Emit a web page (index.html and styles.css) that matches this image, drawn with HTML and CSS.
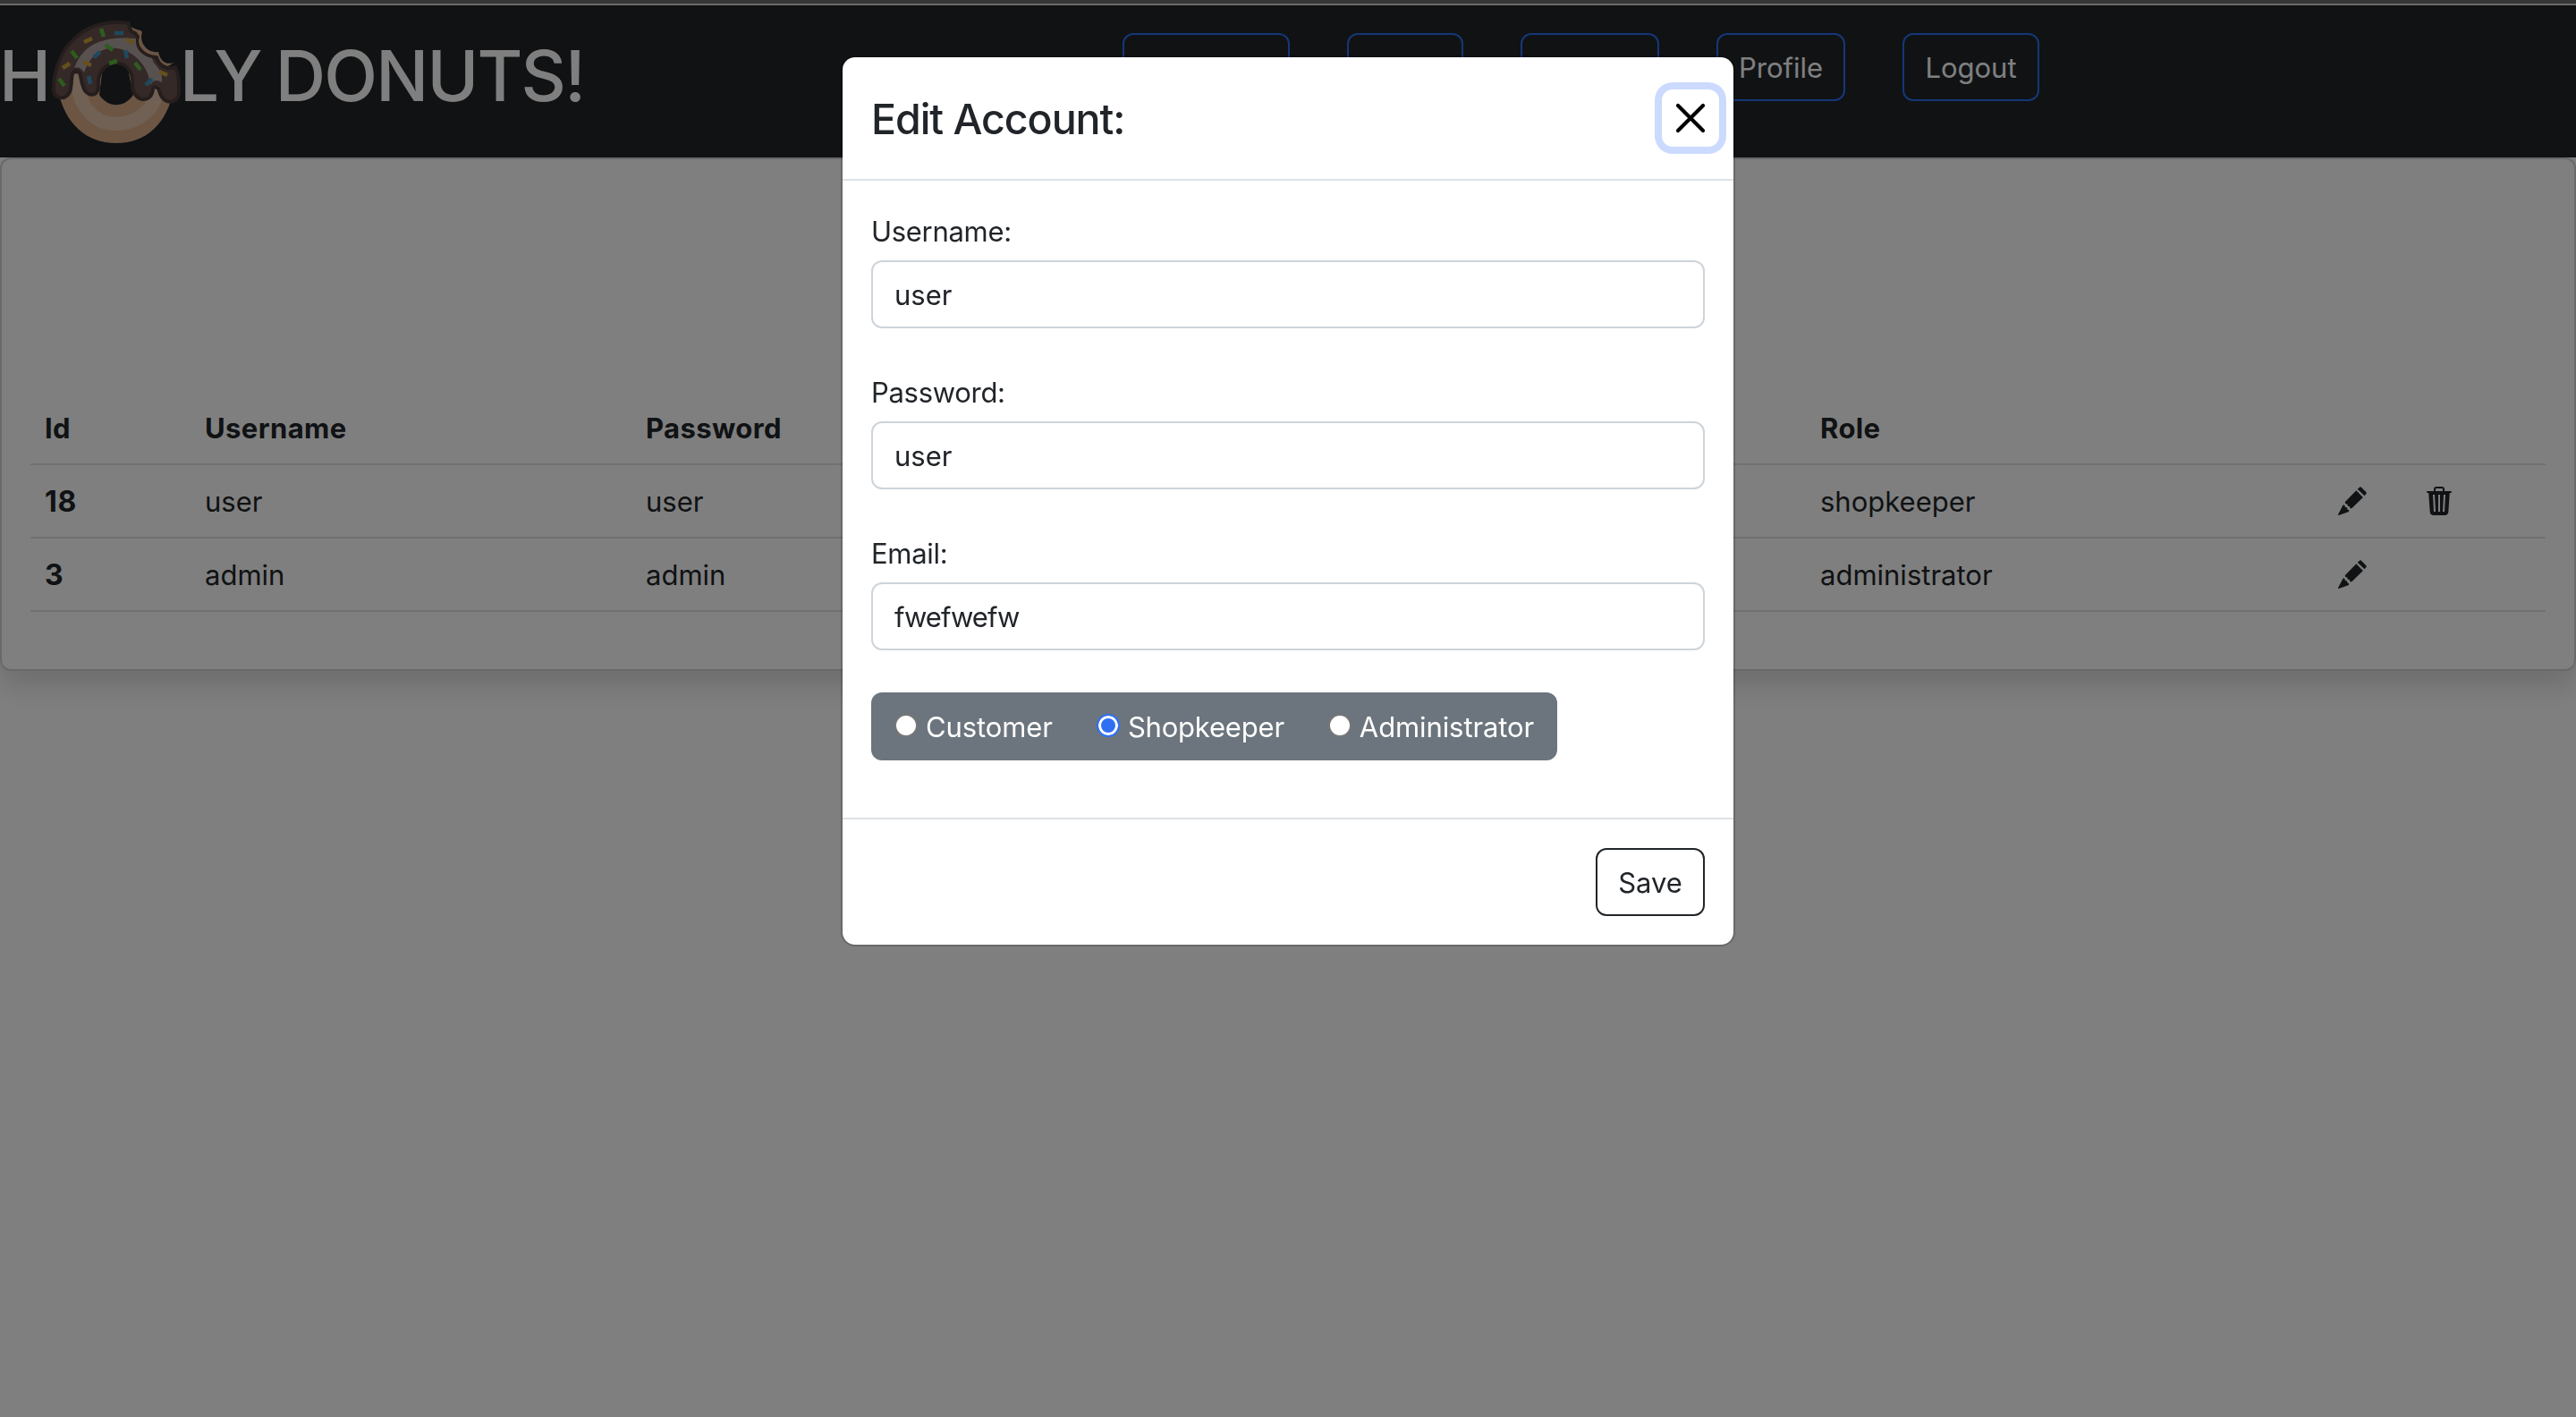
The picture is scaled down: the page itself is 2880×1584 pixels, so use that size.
FILE: index.html
```html
<!DOCTYPE html>
<html lang="en">
<head>
<meta charset="utf-8">
<title>Holy Donuts</title>
<link rel="stylesheet" href="styles.css">
</head>
<body>
<div class="page">
  <header class="navbar">
    <h1 class="brand"><span class="brand-start">H</span>
      <svg class="donut" viewBox="0 0 144 138">
        <path fill="#d9ab87" fill-rule="evenodd" d="M7 80C15 116 38 138 72 138S128 116 136 80L120 60H20Z M53 84C63 99 81 99 91 84L86 60H56Z"/>
        <path fill="none" stroke="#e2c3a9" stroke-width="15" d="M29 62C27 94 46 116.500 72 116.500S118 96 118 76"/>
        <path fill="#d9ab87" d="M89 8C94 12 100 11 101 14C97 24 106 38 119 36C121 46 127 51 137 48L126 54L112 48L96 30Z"/>
        <path fill="#6b5350" stroke="#4b3d3a" stroke-width="4" stroke-linejoin="round" d="M86 4C34-3 2 34 2 78C2 90 19 91 21 77C23 66 21 58 27 57C34 58 31 66 35 75C38 86 51 87 52 76C48 40 94 39 90 74C91 92 112 95 113 77C113 75 118 74 120 79C123 96 142 95 142 81C142 70 142 62 138 53C129 57 119 51 117 42C103 42 92 30 96 19L93 15C88 14 86 11 86 4Z"/>
        <path fill="#afa3a1" d="M25 54C35 28 55 18 94 21C93 32 99 40 112 43C114 52 122 53 123 64V70C118 67 113 67 110 73C107 35 54 10 36 59C33 54 29 52 25 54Z"/>
        <g stroke-width="4.500" stroke-linecap="butt">
          <path stroke="#5cb83f" d="M55 10l3 9M22 35l6 8M60 28l8 6M8 66l6 8M64 49l9-3M93 48l6 8"/>
          <path stroke="#3f93bb" d="M70 15h10M47 42l7-6M82 34l2 9M41 63l2 9M105 73l7-7"/>
          <path stroke="#c9a238" d="M36 25l9-4M83 22l9 4M12 54l8-5M35 47l9 4M120 58l9 4"/>
        </g>
      </svg><span class="brand-end">LY DONUTS!</span></h1>
    <nav class="links">
      <a class="link w1"></a><a class="link w2">Store</a><a class="link w3">Orders</a><a class="link w4">Profile</a><a class="link w5">Logout</a>
    </nav>
  </header>
  <main class="card">
    <table class="accounts">
      <colgroup><col class="c-id"><col class="c-user"><col class="c-rest"><col class="c-role"><col class="c-edit"><col class="c-del"></colgroup>
      <thead><tr><th>Id</th><th>Username</th><th>Password</th><th>Role</th><th></th><th></th></tr></thead>
      <tbody>
        <tr><th class="num">18</th><td>user</td><td>user</td><td>shopkeeper</td>
          <td><svg class="icon" viewBox="0 0 32 32"><use href="#pencil"/></svg></td>
          <td><svg class="icon" viewBox="0 0 32 32"><use href="#trash"/></svg></td></tr>
        <tr><th class="num">3</th><td>admin</td><td>admin</td><td>administrator</td>
          <td><svg class="icon" viewBox="0 0 32 32"><use href="#pencil"/></svg></td><td></td></tr>
      </tbody>
    </table>
  </main>
</div>
<div class="backdrop">
  <form class="modal">
    <div class="modal-header">
      <h2 class="title">Edit Account:</h2>
      <button type="button" class="close" aria-label="Close"><svg viewBox="0 0 32 32"><path d="M2 2L30 30M30 2L2 30" stroke="#000" stroke-width="4.200" stroke-linecap="round"/></svg></button>
    </div>
    <div class="modal-body">
      <label class="field"><span class="label">Username:</span><input class="input" value="user"></label>
      <label class="field"><span class="label">Password:</span><input class="input" value="user"></label>
      <label class="field"><span class="label">Email:</span><input class="input mail" value="fwefwefw"></label>
      <div class="roles">
        <label class="role"><span class="radio"></span><span class="role-name">Customer</span></label>
        <label class="role"><span class="radio checked"></span><span class="role-name tight">Shopkeeper</span></label>
        <label class="role"><span class="radio"></span><span class="role-name">Administrator</span></label>
      </div>
    </div>
    <div class="modal-footer"><button type="button" class="save">Save</button></div>
  </form>
</div>
<svg class="symbols">
  <symbol id="pencil" viewBox="0 0 32 32"><path d="M23.500 1.200Q25 -.5 26.500 1.200L31 5.800Q32.500 7.200 31 8.600L29.500 10.200L21.700 2.800Z M20.300 4.300L27.900 12L15.300 24.300L13.200 24.200L12.900 22L10.700 21.700L10.400 19.600L8.300 19.300L7.700 17.300Z M5.700 20.300L7.500 21L7.900 23L10 23.300L10.300 25.600L12.200 26L12 28L.8 32Q-.2 32 .1 31Z"/></symbol>
  <symbol id="trash" viewBox="0 0 32 32"><path fill-rule="evenodd" d="M10 5V3Q10 0 13 0H19Q22 0 22 3V5H29Q30 5 30 6T29 7H27.800L26.300 28.300Q26 32 22.300 32H9.700Q6 32 5.700 28.300L4.200 7H3Q2 7 2 6T3 5ZM12 5H20V3Q20 2 19 2H13Q12 2 12 3ZM9 9L10 28H12L11 9ZM15 9V28H17V9ZM21 9L20 28H22L23 9Z"/></symbol>
</svg>
</body>
</html>
```
FILE: styles.css
```css
* { box-sizing: border-box; }
body { margin: 0; background: #fff; color: #212529; font: 400 31px/48px Inter, "Liberation Sans", sans-serif; overflow: hidden; }
.page { height: 1584px; border-top: 4px solid #6c6c6c; }
.navbar { height: 172px; border-top: 2px solid #d4d4d4; background: #212529; display: flex; }
.brand { margin: 0; width: 1255px; display: flex; align-items: flex-start; color: #fff; font-size: 78px; font-weight: 500; line-height: 96px; white-space: nowrap; }
.brand-start { width: 58px; padding-top: 31px; text-indent: -1px; }
.donut { width: 144px; height: 138px; margin-top: 16px; }
.brand-end { padding-top: 31px; letter-spacing: -1.8px; word-spacing: -3px; text-indent: -1px; }
.links { display: flex; gap: 64px; padding-top: 31px; }
.link { height: 76px; border: 2px solid #2b6fee; border-radius: 12px; padding: 13px 0 0; text-align: center; color: #fff; }
.w1 { width: 187px; } .w2 { width: 130px; } .w3 { width: 155px; } .w4 { width: 144px; } .w5 { width: 153px; }
.card { height: 574px; border: 2px solid rgba(0,0,0,.175); border-radius: 12px; padding: 259px 32px 0; box-shadow: 0 16px 32px rgba(0,0,0,.15); }
.accounts { table-layout: fixed; width: 2812px; border-collapse: collapse; }
.accounts th, .accounts td { height: 82px; padding: 17px 16px 15px; text-align: left; border-bottom: 2px solid #dee2e6; vertical-align: middle; line-height: 48px; }
.accounts th { letter-spacing: .4px; }
.accounts .num { font-size: 32px; letter-spacing: .6px; }
.c-id { width: 179px; } .c-user { width: 493px; } .c-rest { width: 1313px; } .c-role { width: 579px; } .c-edit { width: 97px; }
.icon { display: block; width: 32px; height: 32px; margin-bottom: 2px; fill: #212529; }
.symbols { display: none; }
.backdrop { position: fixed; inset: 0; background: rgba(0,0,0,.5); padding-top: 62px; }
.modal { width: 1000px; margin: 0 auto; border: 2px solid rgba(0,0,0,.175); border-radius: 16px; background: #fff; background-clip: padding-box; }
.modal-header { height: 138px; padding: 32px; border-bottom: 2px solid #dee2e6; display: flex; justify-content: space-between; align-items: center; }
.title { margin: 0; padding-top: 2px; font-size: 46.5px; line-height: 72px; font-weight: 500; letter-spacing: -1.05px; }
.close { width: 64px; height: 64px; margin-right: -16px; padding: 16px; border: 0; border-radius: 12px; background: #fff; box-shadow: 0 0 0 8px #cbdafe; }
.close svg { display: block; width: 32px; height: 32px; overflow: visible; }
.modal-body { height: 712px; padding: 32px; }
.field { display: block; height: 180px; }
.label { display: block; height: 57px; padding-top: 1px; letter-spacing: -.3px; }
.input { display: block; width: 100%; height: 76px; border: 2px solid #ced4da; border-radius: 12px; padding: 12px 24px; color: #212529; font: inherit; background: #fff; outline: 0; }
.mail { letter-spacing: -.95px; }
.roles { display: inline-flex; width: 767px; height: 76px; padding-left: 26px; gap: 49px; border-radius: 12px; background: #6c757d; color: #fff; line-height: 76px; white-space: nowrap; }
.role { display: flex; align-items: center; gap: 9px; }
.role-name { padding-top: 1px; letter-spacing: -.1px; }
.tight { letter-spacing: -.2px; }
.radio { width: 26px; height: 26px; margin-bottom: 3px; border-radius: 50%; border: 2px solid #767676; background: #fff; }
.checked { border: 2px solid #2f70f3; box-shadow: inset 0 0 0 3px #fff; background: #2f70f3; }
.modal-footer { height: 142px; border-top: 2px solid #dee2e6; padding: 32px; display: flex; justify-content: flex-end; }
.save { width: 122px; height: 76px; border: 2px solid #212529; border-radius: 12px; background: #fff; color: #212529; font: inherit; padding: 1px 0 0; }
```
